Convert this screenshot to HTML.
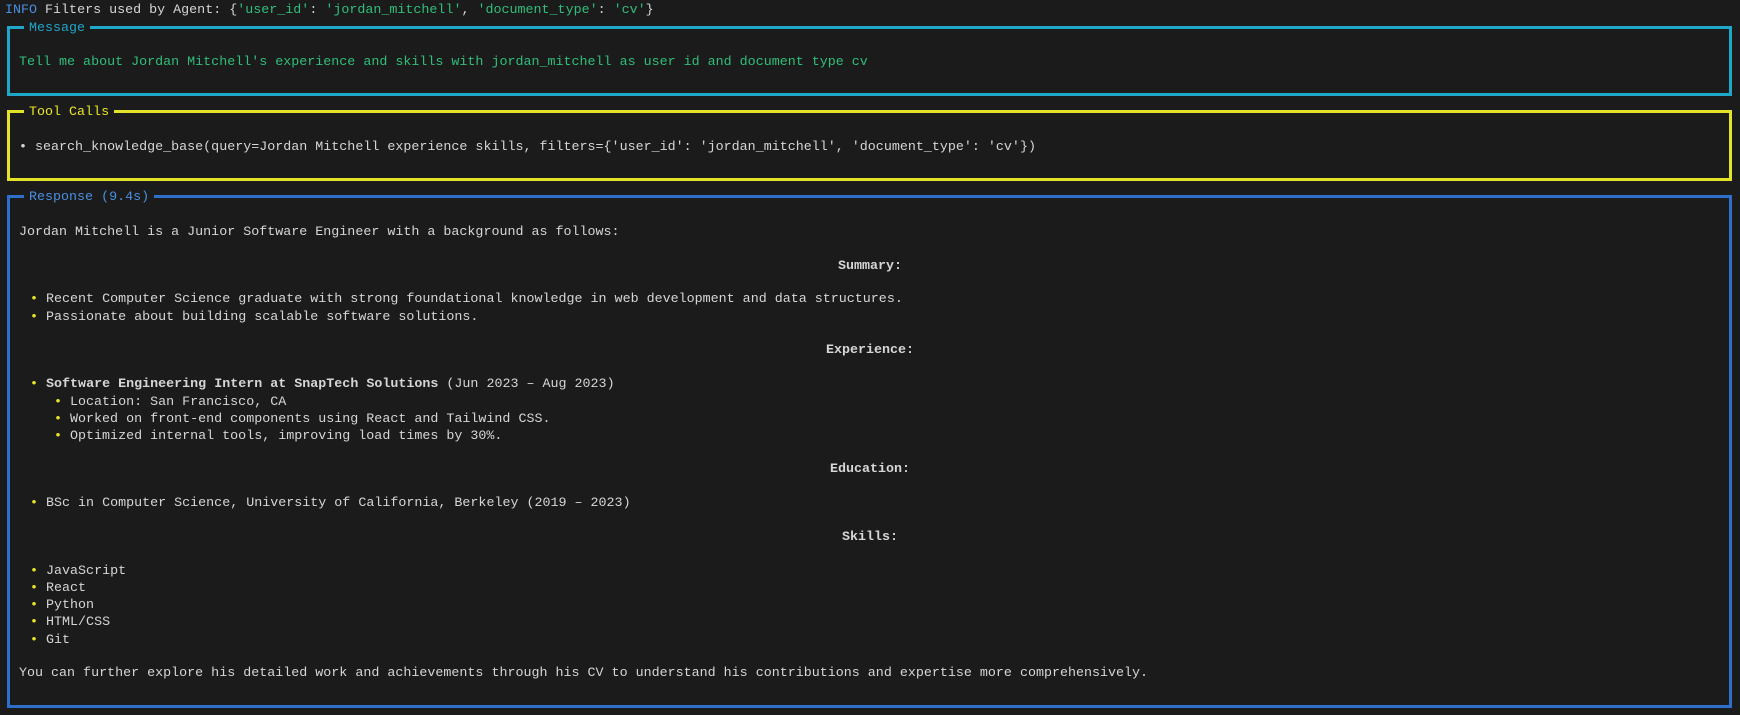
<!DOCTYPE html>
<html><head><meta charset="utf-8"><style>
html,body{margin:0;padding:0;background:#1b1b1b;width:1740px;height:715px;overflow:hidden}
body{position:relative;font-family:"Liberation Mono",monospace;font-size:13.35px;color:#d6d6d6}
.l{position:absolute;white-space:pre;line-height:17px;height:17px;margin-top:2px}
.box{position:absolute;box-sizing:border-box;border:3px solid}
.lab{position:absolute;top:-9px;left:14px;background:#1b1b1b;padding:0 5px;white-space:pre;line-height:17px}
.g{color:#2fbf7a}.b{color:#4a8fe0}.y{color:#e8e625}.c{color:#1ea7c9}
.bl{color:#e8e625}
.h{font-weight:bold;left:0;width:1740px;text-align:center}
</style></head><body>
<div class="l" style="top:0px;left:5px"><span class="b">INFO</span> Filters used by Agent: {<span class="g">'user_id'</span>: <span class="g">'jordan_mitchell'</span>, <span class="g">'document_type'</span>: <span class="g">'cv'</span>}</div>

<div class="box" style="left:7px;top:26px;width:1725px;height:70px;border-color:#1ea7c9"><span class="lab c">Message</span></div>
<div class="l g" style="top:52px;left:19px">Tell me about Jordan Mitchell's experience and skills with jordan_mitchell as user id and document type cv</div>

<div class="box" style="left:7px;top:110px;width:1725px;height:71px;border-color:#e3e32a"><span class="lab y">Tool Calls</span></div>
<div class="l" style="top:137px;left:19px">• search_knowledge_base(query=Jordan Mitchell experience skills, filters={'user_id': 'jordan_mitchell', 'document_type': 'cv'})</div>

<div class="box" style="left:7px;top:195px;width:1725px;height:513px;border-color:#2f6fcc"><span class="lab b">Response (9.4s)</span></div>
<div class="l" style="top:222px;left:19px">Jordan Mitchell is a Junior Software Engineer with a background as follows:</div>
<div class="l h" style="top:256px">Summary:</div>
<div class="l" style="top:289px;left:30px"><span class="bl">•</span> Recent Computer Science graduate with strong foundational knowledge in web development and data structures.</div>
<div class="l" style="top:307px;left:30px"><span class="bl">•</span> Passionate about building scalable software solutions.</div>
<div class="l h" style="top:340px">Experience:</div>
<div class="l" style="top:374px;left:30px"><span class="bl">•</span> <b>Software Engineering Intern at SnapTech Solutions</b> (Jun 2023 – Aug 2023)</div>
<div class="l" style="top:392px;left:54px"><span class="bl">•</span> Location: San Francisco, CA</div>
<div class="l" style="top:409px;left:54px"><span class="bl">•</span> Worked on front-end components using React and Tailwind CSS.</div>
<div class="l" style="top:426px;left:54px"><span class="bl">•</span> Optimized internal tools, improving load times by 30%.</div>
<div class="l h" style="top:459px">Education:</div>
<div class="l" style="top:493px;left:30px"><span class="bl">•</span> BSc in Computer Science, University of California, Berkeley (2019 – 2023)</div>
<div class="l h" style="top:527px">Skills:</div>
<div class="l" style="top:561px;left:30px"><span class="bl">•</span> JavaScript</div>
<div class="l" style="top:578px;left:30px"><span class="bl">•</span> React</div>
<div class="l" style="top:595px;left:30px"><span class="bl">•</span> Python</div>
<div class="l" style="top:612px;left:30px"><span class="bl">•</span> HTML/CSS</div>
<div class="l" style="top:630px;left:30px"><span class="bl">•</span> Git</div>
<div class="l" style="top:663px;left:19px">You can further explore his detailed work and achievements through his CV to understand his contributions and expertise more comprehensively.</div>
</body></html>
